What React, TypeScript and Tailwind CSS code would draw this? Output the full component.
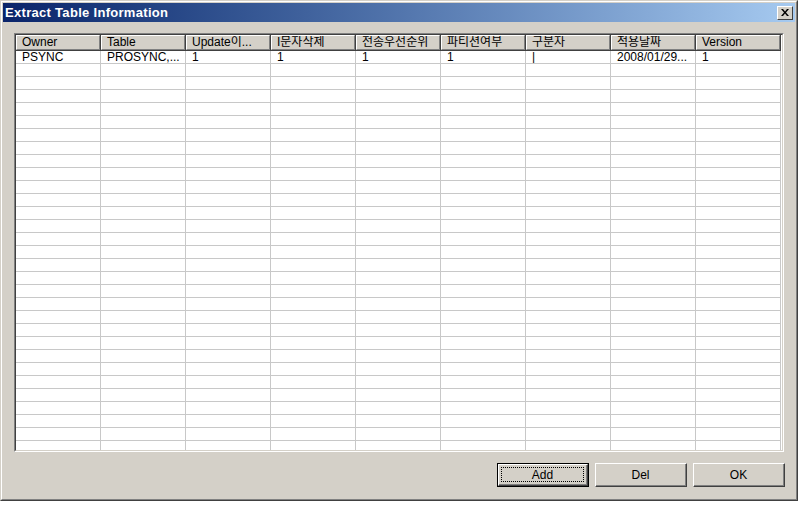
import React from 'react'

const font = '"Liberation Sans", "Noto Sans CJK KR", sans-serif'

const columns = ['Owner', 'Table', 'Update이...', 'I문자삭제', '전송우선순위', '파티션여부', '구분자', '적용날짜', 'Version']
const firstRow = ['PSYNC', 'PROSYNC,...', '1', '1', '1', '1', '|', '2008/01/29...', '1']
const ROWS = 31

function HeaderCell({ label }: { label: string }) {
  return (
    <div className="w-[85px] h-[16px] shrink-0 border-r border-b border-[#404040]">
      <div className="h-full border-t border-l border-white border-r border-b border-r-[#808080] border-b-[#808080] bg-[#D4D0C8] pl-[5px] leading-[13px] text-[12px] text-black whitespace-nowrap overflow-hidden">
        {label}
      </div>
    </div>
  )
}

function Button({ label, focused }: { label: string; focused?: boolean }) {
  if (focused) {
    return (
      <div className="w-[92px] h-[24px] border border-black">
        <div className="h-full border-t border-l border-white border-r border-b border-r-[#404040] border-b-[#404040]">
          <div className="h-full border-r border-b border-[#808080] p-[2px]">
            <div className="h-full border border-dotted border-black flex items-center justify-center text-[12px] leading-none">
              {label}
            </div>
          </div>
        </div>
      </div>
    )
  }
  return (
    <div className="w-[92px] h-[24px] border-t border-l border-white border-r border-b border-r-[#404040] border-b-[#404040]">
      <div className="h-full border-r border-b border-[#808080] flex items-center justify-center text-[12px] leading-none">
        {label}
      </div>
    </div>
  )
}

export default function App() {
  return (
    <div className="w-[800px] h-[512px] bg-white" style={{ fontFamily: font }}>
      {/* dialog frame */}
      <div className="w-[798px] h-[501px] border-t border-l border-[#D4D0C8] border-r border-b border-r-[#404040] border-b-[#404040]">
        <div className="h-full border-t border-l border-white border-r border-b border-r-[#808080] border-b-[#808080] bg-[#D4D0C8] p-[1px] flex flex-col">
          {/* title bar */}
          <div className="h-[19px] flex items-center justify-between bg-gradient-to-r from-[#0A246A] to-[#A6CAF0] pl-[2px] pr-[2px]">
            <span className="text-white font-bold text-[13px] leading-none tracking-[0.3px]">Extract Table Information</span>
            <div className="w-[16px] h-[14px] bg-[#D4D0C8] border-t border-l border-white border-r border-b border-r-[#404040] border-b-[#404040] flex items-center justify-center">
              <svg width="8" height="7" viewBox="0 0 8 7">
                <path d="M0 0h2l2 2.5L6 0h2L5 3.5 8 7H6L4 4.5 2 7H0l3-3.5z" fill="#000" />
              </svg>
            </div>
          </div>

          {/* list view */}
          <div className="mt-[11px] ml-[11px] w-[770px] h-[419px] border-t border-l border-[#808080] border-r border-b border-r-white border-b-white">
            <div className="h-full border-t border-l border-[#404040] border-r border-b border-r-[#D4D0C8] border-b-[#D4D0C8] bg-white overflow-hidden">
              <div className="flex">
                {columns.map((c) => (
                  <HeaderCell key={c} label={c} />
                ))}
              </div>
              {Array.from({ length: ROWS }).map((_, r) => (
                <div key={r} className="flex h-[13px]">
                  {columns.map((c, i) => (
                    <div
                      key={c}
                      className="w-[85px] shrink-0 border-r border-b border-[#C8C8C8] pl-[6px] text-[12px] leading-[12px] text-black whitespace-nowrap overflow-hidden"
                    >
                      {r === 0 ? firstRow[i] : ''}
                    </div>
                  ))}
                </div>
              ))}
            </div>
          </div>

          {/* buttons */}
          <div className="mt-[11px] flex justify-end gap-[6px] pr-[10px]">
            <Button label="Add" focused />
            <Button label="Del" />
            <Button label="OK" />
          </div>
        </div>
      </div>
    </div>
  )
}
